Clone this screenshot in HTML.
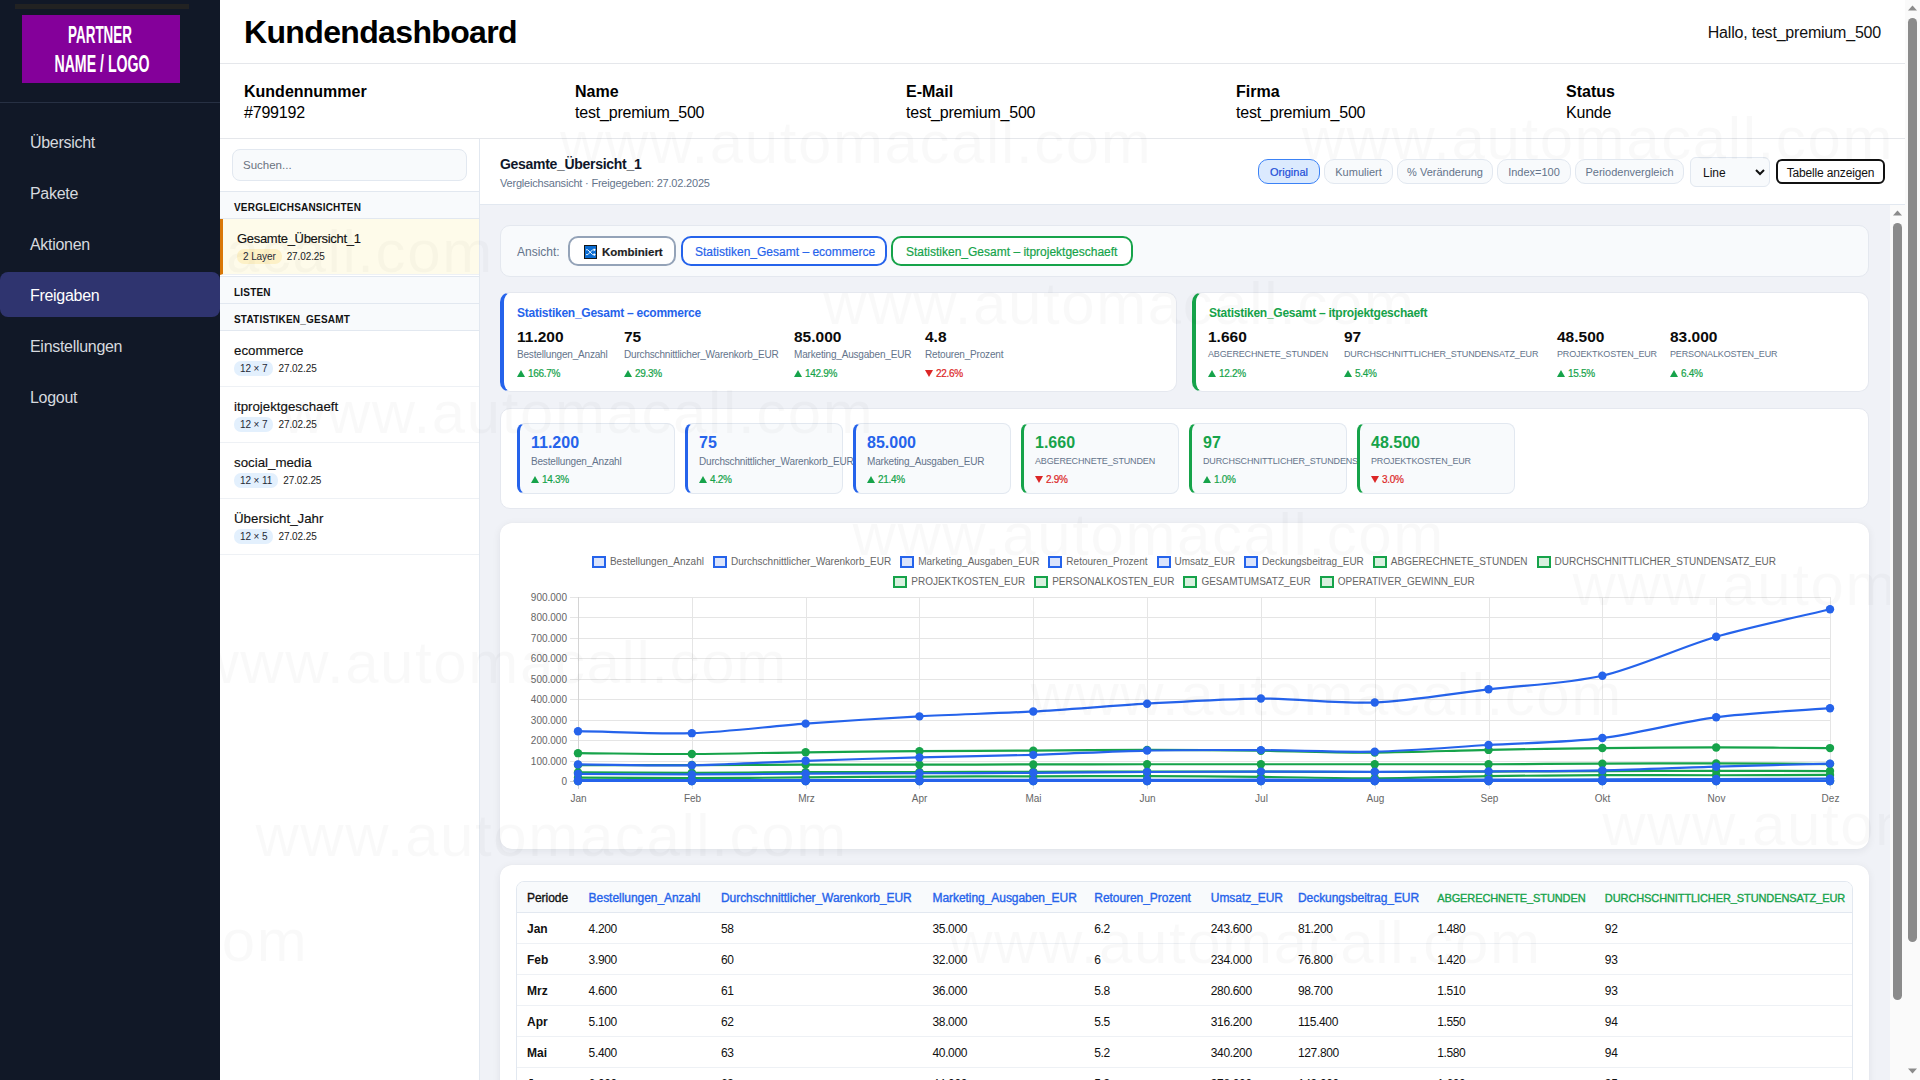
<!DOCTYPE html>
<html lang="de">
<head>
<meta charset="utf-8">
<title>Kundendashboard</title>
<style>
*{box-sizing:border-box;margin:0;padding:0}
html,body{width:1920px;height:1080px;overflow:hidden;background:#fff;font-family:"Liberation Sans",sans-serif;color:#111}
.abs{position:absolute}
/* sidebar */
.sb{position:absolute;left:0;top:0;width:220px;height:1080px;background:#111827}
.sb .bar{position:absolute;left:15px;top:4px;width:174px;height:5px;background:#222}
.sb .logo{position:absolute;left:22px;top:15px;width:158px;height:68px;background:#84009a;color:#fff;text-align:center;font-weight:700}
.sb .logo span{position:absolute;left:-80px;width:318px;font-size:24px;line-height:24px;transform:scaleX(.56);white-space:nowrap}
.sb .sep{position:absolute;left:0;top:102px;width:220px;height:1px;background:#273043}
.nav{position:absolute;left:0;width:220px;height:45px;line-height:45px;padding-left:30px;font-size:16px;color:#d6d9df;letter-spacing:-.3px}
.nav.act{background:#2f346f;color:#fff;border-radius:8px;line-height:47px}
/* header */
.hdr{position:absolute;left:220px;top:0;width:1686px;height:64px;border-bottom:1px solid #e5e7eb}
.hdr h1{position:absolute;left:24px;top:13px;font-size:32px;line-height:38px;font-weight:700;letter-spacing:-.65px;color:#000}
.hdr .hello{position:absolute;right:25px;top:23px;font-size:16px;line-height:20px;color:#111;letter-spacing:-.2px}
.info{position:absolute;left:220px;top:64px;width:1686px;height:75px;border-bottom:1px solid #e5e7eb}
.info .c{position:absolute;top:17px;font-size:16px;line-height:21px;color:#000;letter-spacing:-.2px}
.info .c b{letter-spacing:0}
.info .c b{display:block;font-weight:700}
/* left panel */
.lp{position:absolute;left:220px;top:139px;width:260px;height:941px;border-right:1px solid #e2e8f0;background:#fff}
.search{position:absolute;left:12px;top:10px;width:235px;height:32px;border:1px solid #e2e8f0;border-radius:8px;background:#f8fafc;font-size:11.5px;color:#6b7280;padding:9px 0 0 10px}
.sec{position:absolute;left:0;width:259px;background:#f8fafc;border-top:1px solid #e2e8f0;border-bottom:1px solid #e2e8f0;font-size:10px;font-weight:700;letter-spacing:.2px;padding-left:14px;color:#111;padding-top:2px}
.item{position:absolute;left:0;width:259px;height:56px;border-bottom:1px solid #eef1f5;padding-left:14px}
.item .t{position:absolute;left:14px;top:12px;font-size:13.3px;line-height:16px;color:#111;-webkit-text-stroke:.15px #111}
.item.act .t{font-size:13px;letter-spacing:-.3px}
.item .m{position:absolute;left:14px;top:30px;font-size:10px;line-height:13px;color:#222;letter-spacing:-.1px}
.item .m i{font-style:normal;display:inline-block;background:#e3f0fd;border-radius:7px;padding:1px 6px 1px 6px;margin-right:5px;color:#1f2937}
.item.act{background:#fefbea;border-left:3px solid #d97706}
.item.act .t,.item.act .m{left:14px}
.item.act .m i{background:#fdf1c7}

/* main top bar */
.tb{position:absolute;left:480px;top:139px;width:1426px;height:66px;border-bottom:1px solid #e2e8f0;background:#fff}
.tb .tt{position:absolute;left:20px;top:17px;font-size:14px;line-height:17px;font-weight:700;letter-spacing:-.3px;color:#0f172a}
.tb .st{position:absolute;left:20px;top:38px;font-size:11px;line-height:13px;color:#64748b;letter-spacing:-.2px}
.pill{position:absolute;top:20px;height:25px;border:1px solid #e2e8f0;background:#f8fafc;border-radius:10px;font-size:11px;line-height:25px;text-align:center;color:#64748b}
.pill.on{background:#dbeafe;border-color:#3b82f6;color:#1d4ed8;-webkit-text-stroke:.2px currentColor}
.sel{position:absolute;left:1210px;top:18px;width:80px;height:30px;border:1px solid #e2e8f0;border-radius:6px;background:#f8fafc;font-size:12px;line-height:31px;padding-left:12px;color:#111}
.sel svg{position:absolute;right:4px;top:10px}
.tbl-btn{position:absolute;left:1296px;top:20px;width:109px;height:25px;border:2px solid #111;border-radius:6px;background:#fff;font-size:12px;line-height:24px;text-align:center;color:#111;letter-spacing:-.15px}
/* content */
.ct{position:absolute;left:480px;top:205px;width:1410px;height:875px;background:#f0f2f7;overflow:hidden}
.sc1{position:absolute;left:1890px;top:205px;width:15px;height:875px;background:#fafafa}
.sc2{position:absolute;left:1905px;top:0;width:15px;height:1080px;background:#fafafa}
.thumb{position:absolute;background:#8b8b8b;border-radius:5px}
.card{position:absolute;background:#fff;border:1px solid #e5e8ef;border-radius:10px}

.ans{left:20px;top:20px;width:1369px;height:52px;background:#f8fafc;border-color:#e4e8ef}
.ans .lab{position:absolute;left:16px;top:19px;font-size:12px;line-height:15px;color:#64748b}
.vb{position:absolute;top:10px;height:30px;border:2px solid #94a3b8;border-radius:10px;background:#fff;font-size:12px;line-height:28px;white-space:nowrap;-webkit-text-stroke:.2px currentColor}
.sum{top:87px;width:677px;height:100px;border-left:4px solid}
.sum .h{position:absolute;left:13px;top:13px;font-size:12px;line-height:14px;font-weight:700;letter-spacing:-.25px;white-space:nowrap}
.sum .col{position:absolute;top:35px;white-space:nowrap}
.sum .v{font-size:15.5px;line-height:18px;font-weight:700;color:#0b0b0b}
.sum .l{font-size:10px;line-height:13px;color:#64748b;margin-top:2px;letter-spacing:-.18px}
.uc{font-size:9px!important;letter-spacing:-.15px!important}
.tri{display:inline-block;width:8px;height:7px;margin-right:3px;vertical-align:0}
.sum .d{font-size:10px;line-height:13px;margin-top:6px;letter-spacing:-.3px;-webkit-text-stroke:.2px currentColor}
.kpi{left:20px;top:203px;width:1369px;height:101px}
.tile{position:absolute;top:14px;width:158px;height:71px;background:#f8fafc;border:1px solid #e2e8f0;border-left:3px solid;border-radius:8px;white-space:nowrap}
.tile .v{position:absolute;left:11px;top:9px;font-size:16px;line-height:19px;font-weight:700}
.tile .l{position:absolute;left:11px;top:30.5px;font-size:10px;line-height:13px;color:#64748b;letter-spacing:-.18px}
.tile .d{position:absolute;left:11px;top:48.5px;font-size:10px;line-height:13px;letter-spacing:-.3px;-webkit-text-stroke:.2px currentColor}
.chart{left:20px;top:318px;width:1369px;height:326px;border:none;box-shadow:0 2px 8px rgba(15,23,42,.07),0 0 1px rgba(15,23,42,.06);border-radius:12px}
.tcard{left:20px;top:660px;width:1369px;height:400px;border:none;box-shadow:0 2px 8px rgba(15,23,42,.07),0 0 1px rgba(15,23,42,.06);border-radius:12px}
.tw{position:absolute;left:16px;top:16px;width:1337px;height:400px;border:1px solid #e2e8f0;border-radius:8px;overflow:hidden}
table{border-collapse:collapse;table-layout:fixed;white-space:nowrap}
th{height:30px;background:#f8fafc;border-bottom:1px solid #e2e8f0;font-size:12px;font-weight:400;-webkit-text-stroke:.35px currentColor;letter-spacing:-.05px;text-align:left;padding:3px 0 0 10px}
td{height:31px;border-bottom:1px solid #eef1f5;font-size:12px;letter-spacing:-.35px;text-align:left;padding:2px 0 0 10px;color:#111}
td.p{letter-spacing:0}
td.p{font-size:12px;font-weight:700}
.up{color:#16a34a}.dn{color:#dc2626}
</style>
</head>
<body>
<div class="sb">
  <div class="bar"></div>
  <div class="logo"><span style="top:8px;left:-81px">PARTNER</span><span style="top:37px;transform:scaleX(.59);left:-79.5px">NAME / LOGO</span></div>
  <div class="sep"></div>
  <div class="nav" style="top:120px">Übersicht</div>
  <div class="nav" style="top:171px">Pakete</div>
  <div class="nav" style="top:222px">Aktionen</div>
  <div class="nav act" style="top:272px">Freigaben</div>
  <div class="nav" style="top:324px">Einstellungen</div>
  <div class="nav" style="top:375px">Logout</div>
</div>

<div class="hdr">
  <h1>Kundendashboard</h1>
  <div class="hello">Hallo, test_premium_500</div>
</div>
<div class="info">
  <div class="c" style="left:24px"><b>Kundennummer</b>#799192</div>
  <div class="c" style="left:355px"><b>Name</b>test_premium_500</div>
  <div class="c" style="left:686px"><b>E-Mail</b>test_premium_500</div>
  <div class="c" style="left:1016px"><b>Firma</b>test_premium_500</div>
  <div class="c" style="left:1346px"><b>Status</b>Kunde</div>
</div>

<div class="lp">
  <div class="search">Suchen...</div>
  <div class="sec" style="top:52px;height:28px;line-height:27px">VERGLEICHSANSICHTEN</div>
  <div class="item act" style="top:80px"><div class="t">Gesamte_Übersicht_1</div><div class="m"><i>2 Layer</i>27.02.25</div></div>
  <div class="sec" style="top:137px;height:28px;line-height:27px">LISTEN</div>
  <div class="sec" style="top:164px;height:28px;line-height:27px">STATISTIKEN_GESAMT</div>
  <div class="item" style="top:192px"><div class="t">ecommerce</div><div class="m"><i>12 × 7</i>27.02.25</div></div>
  <div class="item" style="top:248px"><div class="t">itprojektgeschaeft</div><div class="m"><i>12 × 7</i>27.02.25</div></div>
  <div class="item" style="top:304px"><div class="t">social_media</div><div class="m"><i>12 × 11</i>27.02.25</div></div>
  <div class="item" style="top:360px"><div class="t">Übersicht_Jahr</div><div class="m"><i>12 × 5</i>27.02.25</div></div>
</div>


<div class="tb">
  <div class="tt">Gesamte_Übersicht_1</div>
  <div class="st">Vergleichsansicht · Freigegeben: 27.02.2025</div>
  <div class="pill on" style="left:778px;width:62px">Original</div>
  <div class="pill" style="left:844px;width:69px">Kumuliert</div>
  <div class="pill" style="left:917px;width:96px">% Veränderung</div>
  <div class="pill" style="left:1017px;width:74px">Index=100</div>
  <div class="pill" style="left:1095px;width:109px">Periodenvergleich</div>
  <div class="sel">Line<svg width="10" height="8" viewBox="0 0 10 8"><path d="M1 2 L5 6 L9 2" fill="none" stroke="#111" stroke-width="2"/></svg></div>
  <div class="tbl-btn">Tabelle anzeigen</div>
</div>
<div class="ct"><div class="card ans"><div class="lab">Ansicht:</div><div class="vb" style="left:67px;width:108px;padding-left:32px;font-weight:700;font-size:11.5px;color:#1e1e1e"><svg style="position:absolute;left:14px;top:6.5px" width="13" height="14" viewBox="0 0 13 14"><rect x="0.5" y="0.5" width="12" height="13" fill="#0a6cd2" stroke="#161616" stroke-width="1"/><path d="M2 4.8 H3.8 L8.6 9.6 H10.2 M2 9.6 H3.8 L8.6 4.8 H10.2" fill="none" stroke="#fff" stroke-width="0.9"/><path d="M9.8 3.2 L11.8 4.8 L9.8 6.4Z M9.8 8 L11.8 9.6 L9.8 11.2Z" fill="#fff"/></svg>Kombiniert</div><div class="vb" style="left:180px;width:206px;border-color:#2563eb;color:#2563eb;padding-left:12px">Statistiken_Gesamt – ecommerce</div><div class="vb" style="left:390px;width:242px;border-color:#16a34a;color:#16a34a;padding-left:13px">Statistiken_Gesamt – itprojektgeschaeft</div></div><div class="card sum" style="left:20px;border-left-color:#2563eb"><div class="h" style="color:#2563eb">Statistiken_Gesamt – ecommerce</div><div class="col" style="left:13px"><div class="v">11.200</div><div class="l">Bestellungen_Anzahl</div><div class="d up"><svg class="tri" viewBox="0 0 8 7"><path d="M4 0 L8 7 L0 7Z" fill="#16a34a"/></svg>166.7%</div></div><div class="col" style="left:120px"><div class="v">75</div><div class="l">Durchschnittlicher_Warenkorb_EUR</div><div class="d up"><svg class="tri" viewBox="0 0 8 7"><path d="M4 0 L8 7 L0 7Z" fill="#16a34a"/></svg>29.3%</div></div><div class="col" style="left:290px"><div class="v">85.000</div><div class="l">Marketing_Ausgaben_EUR</div><div class="d up"><svg class="tri" viewBox="0 0 8 7"><path d="M4 0 L8 7 L0 7Z" fill="#16a34a"/></svg>142.9%</div></div><div class="col" style="left:421px"><div class="v">4.8</div><div class="l">Retouren_Prozent</div><div class="d dn"><svg class="tri" viewBox="0 0 8 7"><path d="M0 0 L8 0 L4 7Z" fill="#dc2626"/></svg>22.6%</div></div></div><div class="card sum" style="left:712px;border-left-color:#16a34a"><div class="h" style="color:#16a34a">Statistiken_Gesamt – itprojektgeschaeft</div><div class="col" style="left:12px"><div class="v">1.660</div><div class="l uc">ABGERECHNETE_STUNDEN</div><div class="d up"><svg class="tri" viewBox="0 0 8 7"><path d="M4 0 L8 7 L0 7Z" fill="#16a34a"/></svg>12.2%</div></div><div class="col" style="left:148px"><div class="v">97</div><div class="l uc">DURCHSCHNITTLICHER_STUNDENSATZ_EUR</div><div class="d up"><svg class="tri" viewBox="0 0 8 7"><path d="M4 0 L8 7 L0 7Z" fill="#16a34a"/></svg>5.4%</div></div><div class="col" style="left:361px"><div class="v">48.500</div><div class="l uc">PROJEKTKOSTEN_EUR</div><div class="d up"><svg class="tri" viewBox="0 0 8 7"><path d="M4 0 L8 7 L0 7Z" fill="#16a34a"/></svg>15.5%</div></div><div class="col" style="left:474px"><div class="v">83.000</div><div class="l uc">PERSONALKOSTEN_EUR</div><div class="d up"><svg class="tri" viewBox="0 0 8 7"><path d="M4 0 L8 7 L0 7Z" fill="#16a34a"/></svg>6.4%</div></div></div><div class="card kpi"><div class="tile" style="left:16px;border-left-color:#2563eb"><div class="v" style="color:#2563eb">11.200</div><div class="l">Bestellungen_Anzahl</div><div class="d up"><svg class="tri" viewBox="0 0 8 7"><path d="M4 0 L8 7 L0 7Z" fill="#16a34a"/></svg>14.3%</div></div><div class="tile" style="left:184px;border-left-color:#2563eb"><div class="v" style="color:#2563eb">75</div><div class="l">Durchschnittlicher_Warenkorb_EUR</div><div class="d up"><svg class="tri" viewBox="0 0 8 7"><path d="M4 0 L8 7 L0 7Z" fill="#16a34a"/></svg>4.2%</div></div><div class="tile" style="left:352px;border-left-color:#2563eb"><div class="v" style="color:#2563eb">85.000</div><div class="l">Marketing_Ausgaben_EUR</div><div class="d up"><svg class="tri" viewBox="0 0 8 7"><path d="M4 0 L8 7 L0 7Z" fill="#16a34a"/></svg>21.4%</div></div><div class="tile" style="left:520px;border-left-color:#16a34a"><div class="v" style="color:#16a34a">1.660</div><div class="l uc">ABGERECHNETE_STUNDEN</div><div class="d dn"><svg class="tri" viewBox="0 0 8 7"><path d="M0 0 L8 0 L4 7Z" fill="#dc2626"/></svg>2.9%</div></div><div class="tile" style="left:688px;border-left-color:#16a34a"><div class="v" style="color:#16a34a">97</div><div class="l uc">DURCHSCHNITTLICHER_STUNDENSATZ_EUR</div><div class="d up"><svg class="tri" viewBox="0 0 8 7"><path d="M4 0 L8 7 L0 7Z" fill="#16a34a"/></svg>1.0%</div></div><div class="tile" style="left:856px;border-left-color:#16a34a"><div class="v" style="color:#16a34a">48.500</div><div class="l uc">PROJEKTKOSTEN_EUR</div><div class="d dn"><svg class="tri" viewBox="0 0 8 7"><path d="M0 0 L8 0 L4 7Z" fill="#dc2626"/></svg>3.0%</div></div></div><div class="card chart"><svg style="position:absolute;left:0;top:0" width="1369" height="326" viewBox="0 0 1369 326" font-family="Liberation Sans" font-size="10" fill="#666"><line x1="70" y1="258.5" x2="1330.5" y2="258.5" stroke="#e5e5e5" stroke-width="1"/><text x="67" y="262.0" text-anchor="end">0</text><line x1="70" y1="238.5" x2="1330.5" y2="238.5" stroke="#e5e5e5" stroke-width="1"/><text x="67" y="242.0" text-anchor="end">100.000</text><line x1="70" y1="217.5" x2="1330.5" y2="217.5" stroke="#e5e5e5" stroke-width="1"/><text x="67" y="221.0" text-anchor="end">200.000</text><line x1="70" y1="197.5" x2="1330.5" y2="197.5" stroke="#e5e5e5" stroke-width="1"/><text x="67" y="201.0" text-anchor="end">300.000</text><line x1="70" y1="176.5" x2="1330.5" y2="176.5" stroke="#e5e5e5" stroke-width="1"/><text x="67" y="180.0" text-anchor="end">400.000</text><line x1="70" y1="156.5" x2="1330.5" y2="156.5" stroke="#e5e5e5" stroke-width="1"/><text x="67" y="160.0" text-anchor="end">500.000</text><line x1="70" y1="135.5" x2="1330.5" y2="135.5" stroke="#e5e5e5" stroke-width="1"/><text x="67" y="139.0" text-anchor="end">600.000</text><line x1="70" y1="115.5" x2="1330.5" y2="115.5" stroke="#e5e5e5" stroke-width="1"/><text x="67" y="119.0" text-anchor="end">700.000</text><line x1="70" y1="94.5" x2="1330.5" y2="94.5" stroke="#e5e5e5" stroke-width="1"/><text x="67" y="98.0" text-anchor="end">800.000</text><line x1="70" y1="74.5" x2="1330.5" y2="74.5" stroke="#e5e5e5" stroke-width="1"/><text x="67" y="78.0" text-anchor="end">900.000</text><line x1="78.5" y1="74" x2="78.5" y2="266" stroke="#e5e5e5" stroke-width="1"/><text x="78.5" y="278.5" text-anchor="middle">Jan</text><line x1="192.5" y1="74" x2="192.5" y2="266" stroke="#e5e5e5" stroke-width="1"/><text x="192.5" y="278.5" text-anchor="middle">Feb</text><line x1="306.5" y1="74" x2="306.5" y2="266" stroke="#e5e5e5" stroke-width="1"/><text x="306.5" y="278.5" text-anchor="middle">Mrz</text><line x1="419.5" y1="74" x2="419.5" y2="266" stroke="#e5e5e5" stroke-width="1"/><text x="419.5" y="278.5" text-anchor="middle">Apr</text><line x1="533.5" y1="74" x2="533.5" y2="266" stroke="#e5e5e5" stroke-width="1"/><text x="533.5" y="278.5" text-anchor="middle">Mai</text><line x1="647.5" y1="74" x2="647.5" y2="266" stroke="#e5e5e5" stroke-width="1"/><text x="647.5" y="278.5" text-anchor="middle">Jun</text><line x1="761.5" y1="74" x2="761.5" y2="266" stroke="#e5e5e5" stroke-width="1"/><text x="761.5" y="278.5" text-anchor="middle">Jul</text><line x1="875.5" y1="74" x2="875.5" y2="266" stroke="#e5e5e5" stroke-width="1"/><text x="875.5" y="278.5" text-anchor="middle">Aug</text><line x1="989.5" y1="74" x2="989.5" y2="266" stroke="#e5e5e5" stroke-width="1"/><text x="989.5" y="278.5" text-anchor="middle">Sep</text><line x1="1102.5" y1="74" x2="1102.5" y2="266" stroke="#e5e5e5" stroke-width="1"/><text x="1102.5" y="278.5" text-anchor="middle">Okt</text><line x1="1216.5" y1="74" x2="1216.5" y2="266" stroke="#e5e5e5" stroke-width="1"/><text x="1216.5" y="278.5" text-anchor="middle">Nov</text><line x1="1330.5" y1="74" x2="1330.5" y2="266" stroke="#e5e5e5" stroke-width="1"/><text x="1330.5" y="278.5" text-anchor="middle">Dez</text><line x1="78.5" y1="74" x2="78.5" y2="266" stroke="#d4d4d4" stroke-width="1"/><line x1="70" y1="258.5" x2="1330.5" y2="258.5" stroke="#d4d4d4" stroke-width="1"/><path d="M78.00 254.70 C112.15 254.82 157.67 255.16 191.82 255.13 C225.96 255.09 271.49 254.67 305.64 254.44 C339.78 254.20 385.31 253.72 419.45 253.56 C453.60 253.41 499.13 253.47 533.27 253.40 C567.42 253.33 612.95 253.02 647.09 253.09 C681.24 253.16 726.76 253.54 760.91 253.87 C795.06 254.20 840.58 255.43 874.73 255.32 C908.87 255.20 954.40 253.56 988.55 253.09 C1022.69 252.63 1068.22 252.35 1102.36 252.22 C1136.51 252.09 1182.04 252.28 1216.18 252.24 C1250.33 252.20 1295.85 252.05 1330.00 251.96" fill="none" stroke="#16a34a" stroke-width="2.2"/><circle cx="78.00" cy="254.70" r="4.2" fill="#16a34a"/><circle cx="191.82" cy="255.13" r="4.2" fill="#16a34a"/><circle cx="305.64" cy="254.44" r="4.2" fill="#16a34a"/><circle cx="419.45" cy="253.56" r="4.2" fill="#16a34a"/><circle cx="533.27" cy="253.40" r="4.2" fill="#16a34a"/><circle cx="647.09" cy="253.09" r="4.2" fill="#16a34a"/><circle cx="760.91" cy="253.87" r="4.2" fill="#16a34a"/><circle cx="874.73" cy="255.32" r="4.2" fill="#16a34a"/><circle cx="988.55" cy="253.09" r="4.2" fill="#16a34a"/><circle cx="1102.36" cy="252.22" r="4.2" fill="#16a34a"/><circle cx="1216.18" cy="252.24" r="4.2" fill="#16a34a"/><circle cx="1330.00" cy="251.96" r="4.2" fill="#16a34a"/><path d="M78.00 230.16 C112.15 230.41 157.67 231.13 191.82 231.00 C225.97 230.87 271.49 229.71 305.64 229.29 C339.78 228.87 385.31 228.46 419.45 228.21 C453.60 227.96 499.13 227.83 533.27 227.64 C567.42 227.44 612.95 226.91 647.09 226.92 C681.24 226.93 726.77 227.31 760.91 227.70 C795.06 228.10 840.58 229.67 874.73 229.56 C908.88 229.44 954.40 227.60 988.55 226.92 C1022.69 226.24 1068.22 225.40 1102.36 225.03 C1136.51 224.65 1182.04 224.43 1216.18 224.44 C1250.33 224.45 1295.85 224.89 1330.00 225.08" fill="none" stroke="#16a34a" stroke-width="2.2"/><circle cx="78.00" cy="230.16" r="4.2" fill="#16a34a"/><circle cx="191.82" cy="231.00" r="4.2" fill="#16a34a"/><circle cx="305.64" cy="229.29" r="4.2" fill="#16a34a"/><circle cx="419.45" cy="228.21" r="4.2" fill="#16a34a"/><circle cx="533.27" cy="227.64" r="4.2" fill="#16a34a"/><circle cx="647.09" cy="226.92" r="4.2" fill="#16a34a"/><circle cx="760.91" cy="227.70" r="4.2" fill="#16a34a"/><circle cx="874.73" cy="229.56" r="4.2" fill="#16a34a"/><circle cx="988.55" cy="226.92" r="4.2" fill="#16a34a"/><circle cx="1102.36" cy="225.03" r="4.2" fill="#16a34a"/><circle cx="1216.18" cy="224.44" r="4.2" fill="#16a34a"/><circle cx="1330.00" cy="225.08" r="4.2" fill="#16a34a"/><path d="M78.00 242.05 C112.15 242.05 157.67 242.11 191.82 242.05 C225.96 241.99 271.49 241.71 305.64 241.64 C339.78 241.58 385.31 241.68 419.45 241.64 C453.60 241.61 499.13 241.50 533.27 241.44 C567.42 241.38 612.95 241.27 647.09 241.24 C681.24 241.20 726.76 241.24 760.91 241.24 C795.05 241.24 840.58 241.24 874.73 241.24 C908.87 241.24 954.40 241.33 988.55 241.24 C1022.69 241.14 1068.22 240.74 1102.36 240.62 C1136.51 240.50 1182.04 240.36 1216.18 240.42 C1250.33 240.48 1295.85 240.85 1330.00 241.03" fill="none" stroke="#16a34a" stroke-width="2.2"/><circle cx="78.00" cy="242.05" r="4.2" fill="#16a34a"/><circle cx="191.82" cy="242.05" r="4.2" fill="#16a34a"/><circle cx="305.64" cy="241.64" r="4.2" fill="#16a34a"/><circle cx="419.45" cy="241.64" r="4.2" fill="#16a34a"/><circle cx="533.27" cy="241.44" r="4.2" fill="#16a34a"/><circle cx="647.09" cy="241.24" r="4.2" fill="#16a34a"/><circle cx="760.91" cy="241.24" r="4.2" fill="#16a34a"/><circle cx="874.73" cy="241.24" r="4.2" fill="#16a34a"/><circle cx="988.55" cy="241.24" r="4.2" fill="#16a34a"/><circle cx="1102.36" cy="240.62" r="4.2" fill="#16a34a"/><circle cx="1216.18" cy="240.42" r="4.2" fill="#16a34a"/><circle cx="1330.00" cy="241.03" r="4.2" fill="#16a34a"/><path d="M78.00 249.41 C112.15 249.54 157.67 249.85 191.82 249.82 C225.96 249.79 271.49 249.33 305.64 249.21 C339.78 249.09 385.31 249.07 419.45 249.00 C453.60 248.94 499.13 248.86 533.27 248.80 C567.42 248.74 612.95 248.63 647.09 248.60 C681.24 248.56 726.76 248.53 760.91 248.60 C795.05 248.66 840.58 249.00 874.73 249.00 C908.87 249.00 954.40 248.72 988.55 248.60 C1022.69 248.47 1068.22 248.31 1102.36 248.19 C1136.51 248.06 1182.04 247.79 1216.18 247.78 C1250.33 247.76 1295.85 247.99 1330.00 248.08" fill="none" stroke="#16a34a" stroke-width="2.2"/><circle cx="78.00" cy="249.41" r="4.2" fill="#16a34a"/><circle cx="191.82" cy="249.82" r="4.2" fill="#16a34a"/><circle cx="305.64" cy="249.21" r="4.2" fill="#16a34a"/><circle cx="419.45" cy="249.00" r="4.2" fill="#16a34a"/><circle cx="533.27" cy="248.80" r="4.2" fill="#16a34a"/><circle cx="647.09" cy="248.60" r="4.2" fill="#16a34a"/><circle cx="760.91" cy="248.60" r="4.2" fill="#16a34a"/><circle cx="874.73" cy="249.00" r="4.2" fill="#16a34a"/><circle cx="988.55" cy="248.60" r="4.2" fill="#16a34a"/><circle cx="1102.36" cy="248.19" r="4.2" fill="#16a34a"/><circle cx="1216.18" cy="247.78" r="4.2" fill="#16a34a"/><circle cx="1330.00" cy="248.08" r="4.2" fill="#16a34a"/><path d="M78.00 257.98 C112.15 257.98 157.67 257.98 191.82 257.98 C225.96 257.98 271.49 257.98 305.64 257.98 C339.78 257.98 385.31 257.98 419.45 257.98 C453.60 257.98 499.13 257.98 533.27 257.98 C567.42 257.98 612.95 257.98 647.09 257.98 C681.24 257.98 726.76 257.98 760.91 257.98 C795.05 257.98 840.58 257.98 874.73 257.98 C908.87 257.98 954.40 257.98 988.55 257.98 C1022.69 257.98 1068.22 257.98 1102.36 257.98 C1136.51 257.98 1182.04 257.98 1216.18 257.98 C1250.33 257.98 1295.85 257.98 1330.00 257.98" fill="none" stroke="#16a34a" stroke-width="2.2"/><circle cx="78.00" cy="257.98" r="4.2" fill="#16a34a"/><circle cx="191.82" cy="257.98" r="4.2" fill="#16a34a"/><circle cx="305.64" cy="257.98" r="4.2" fill="#16a34a"/><circle cx="419.45" cy="257.98" r="4.2" fill="#16a34a"/><circle cx="533.27" cy="257.98" r="4.2" fill="#16a34a"/><circle cx="647.09" cy="257.98" r="4.2" fill="#16a34a"/><circle cx="760.91" cy="257.98" r="4.2" fill="#16a34a"/><circle cx="874.73" cy="257.98" r="4.2" fill="#16a34a"/><circle cx="988.55" cy="257.98" r="4.2" fill="#16a34a"/><circle cx="1102.36" cy="257.98" r="4.2" fill="#16a34a"/><circle cx="1216.18" cy="257.98" r="4.2" fill="#16a34a"/><circle cx="1330.00" cy="257.98" r="4.2" fill="#16a34a"/><path d="M78.00 257.70 C112.15 257.70 157.67 257.71 191.82 257.71 C225.96 257.71 271.49 257.70 305.64 257.69 C339.78 257.69 385.31 257.69 419.45 257.68 C453.60 257.68 499.13 257.68 533.27 257.68 C567.42 257.68 612.95 257.67 647.09 257.67 C681.24 257.67 726.76 257.68 760.91 257.68 C795.05 257.68 840.58 257.70 874.73 257.70 C908.87 257.70 954.40 257.68 988.55 257.67 C1022.69 257.67 1068.22 257.66 1102.36 257.66 C1136.51 257.65 1182.04 257.65 1216.18 257.65 C1250.33 257.65 1295.85 257.66 1330.00 257.66" fill="none" stroke="#16a34a" stroke-width="2.2"/><circle cx="78.00" cy="257.70" r="4.2" fill="#16a34a"/><circle cx="191.82" cy="257.71" r="4.2" fill="#16a34a"/><circle cx="305.64" cy="257.69" r="4.2" fill="#16a34a"/><circle cx="419.45" cy="257.68" r="4.2" fill="#16a34a"/><circle cx="533.27" cy="257.68" r="4.2" fill="#16a34a"/><circle cx="647.09" cy="257.67" r="4.2" fill="#16a34a"/><circle cx="760.91" cy="257.68" r="4.2" fill="#16a34a"/><circle cx="874.73" cy="257.70" r="4.2" fill="#16a34a"/><circle cx="988.55" cy="257.67" r="4.2" fill="#16a34a"/><circle cx="1102.36" cy="257.66" r="4.2" fill="#16a34a"/><circle cx="1216.18" cy="257.65" r="4.2" fill="#16a34a"/><circle cx="1330.00" cy="257.66" r="4.2" fill="#16a34a"/><path d="M78.00 241.40 C112.15 241.67 157.69 242.84 191.82 242.30 C225.98 241.76 271.49 239.01 305.64 237.82 C339.78 236.64 385.31 235.30 419.45 234.41 C453.60 233.51 499.14 232.90 533.27 231.87 C567.43 230.84 612.93 228.25 647.09 227.54 C681.22 226.83 726.77 226.96 760.91 227.13 C795.06 227.30 840.61 229.43 874.73 228.66 C908.90 227.89 954.40 224.06 988.55 222.02 C1022.69 219.98 1068.47 219.21 1102.36 215.07 C1136.76 210.87 1181.81 198.72 1216.18 194.21 C1250.10 189.77 1295.85 187.92 1330.00 185.22" fill="none" stroke="#2563eb" stroke-width="2.2"/><circle cx="78.00" cy="241.40" r="4.2" fill="#2563eb"/><circle cx="191.82" cy="242.30" r="4.2" fill="#2563eb"/><circle cx="305.64" cy="237.82" r="4.2" fill="#2563eb"/><circle cx="419.45" cy="234.41" r="4.2" fill="#2563eb"/><circle cx="533.27" cy="231.87" r="4.2" fill="#2563eb"/><circle cx="647.09" cy="227.54" r="4.2" fill="#2563eb"/><circle cx="760.91" cy="227.13" r="4.2" fill="#2563eb"/><circle cx="874.73" cy="228.66" r="4.2" fill="#2563eb"/><circle cx="988.55" cy="222.02" r="4.2" fill="#2563eb"/><circle cx="1102.36" cy="215.07" r="4.2" fill="#2563eb"/><circle cx="1216.18" cy="194.21" r="4.2" fill="#2563eb"/><circle cx="1330.00" cy="185.22" r="4.2" fill="#2563eb"/><path d="M78.00 208.20 C112.15 208.79 157.73 211.29 191.82 210.16 C226.02 209.02 271.47 203.16 305.64 200.63 C339.76 198.11 385.29 195.18 419.45 193.35 C453.58 191.53 499.15 190.34 533.27 188.45 C567.44 186.55 612.92 182.65 647.09 180.72 C681.21 178.79 726.76 175.75 760.91 175.57 C795.05 175.38 840.69 180.88 874.73 179.49 C908.98 178.10 954.41 170.32 988.55 166.31 C1022.70 162.29 1069.05 160.45 1102.36 152.75 C1137.34 144.68 1181.57 123.85 1216.18 113.74 C1249.86 103.91 1295.85 94.51 1330.00 86.27" fill="none" stroke="#2563eb" stroke-width="2.2"/><circle cx="78.00" cy="208.20" r="4.2" fill="#2563eb"/><circle cx="191.82" cy="210.16" r="4.2" fill="#2563eb"/><circle cx="305.64" cy="200.63" r="4.2" fill="#2563eb"/><circle cx="419.45" cy="193.35" r="4.2" fill="#2563eb"/><circle cx="533.27" cy="188.45" r="4.2" fill="#2563eb"/><circle cx="647.09" cy="180.72" r="4.2" fill="#2563eb"/><circle cx="760.91" cy="175.57" r="4.2" fill="#2563eb"/><circle cx="874.73" cy="179.49" r="4.2" fill="#2563eb"/><circle cx="988.55" cy="166.31" r="4.2" fill="#2563eb"/><circle cx="1102.36" cy="152.75" r="4.2" fill="#2563eb"/><circle cx="1216.18" cy="113.74" r="4.2" fill="#2563eb"/><circle cx="1330.00" cy="86.27" r="4.2" fill="#2563eb"/><path d="M78.00 258.00 C112.15 258.00 157.67 258.00 191.82 258.00 C225.96 258.00 271.49 258.00 305.64 258.00 C339.78 258.00 385.31 258.00 419.45 258.00 C453.60 258.00 499.13 258.00 533.27 258.00 C567.42 258.00 612.95 258.00 647.09 258.00 C681.24 258.00 726.76 258.00 760.91 258.00 C795.05 258.00 840.58 258.00 874.73 258.00 C908.87 258.00 954.40 258.00 988.55 258.00 C1022.69 258.00 1068.22 258.00 1102.36 258.00 C1136.51 258.00 1182.04 258.00 1216.18 258.00 C1250.33 258.00 1295.85 258.00 1330.00 258.00" fill="none" stroke="#2563eb" stroke-width="2.2"/><circle cx="78.00" cy="258.00" r="4.2" fill="#2563eb"/><circle cx="191.82" cy="258.00" r="4.2" fill="#2563eb"/><circle cx="305.64" cy="258.00" r="4.2" fill="#2563eb"/><circle cx="419.45" cy="258.00" r="4.2" fill="#2563eb"/><circle cx="533.27" cy="258.00" r="4.2" fill="#2563eb"/><circle cx="647.09" cy="258.00" r="4.2" fill="#2563eb"/><circle cx="760.91" cy="258.00" r="4.2" fill="#2563eb"/><circle cx="874.73" cy="258.00" r="4.2" fill="#2563eb"/><circle cx="988.55" cy="258.00" r="4.2" fill="#2563eb"/><circle cx="1102.36" cy="258.00" r="4.2" fill="#2563eb"/><circle cx="1216.18" cy="258.00" r="4.2" fill="#2563eb"/><circle cx="1330.00" cy="258.00" r="4.2" fill="#2563eb"/><path d="M78.00 250.84 C112.15 251.03 157.67 251.49 191.82 251.46 C225.96 251.43 271.49 250.82 305.64 250.64 C339.78 250.46 385.31 250.35 419.45 250.23 C453.60 250.11 499.13 250.01 533.27 249.82 C567.42 249.64 612.95 249.19 647.09 249.00 C681.24 248.82 726.76 248.63 760.91 248.60 C795.05 248.56 840.58 248.83 874.73 248.80 C908.87 248.77 954.40 248.61 988.55 248.39 C1022.69 248.18 1068.23 248.07 1102.36 247.37 C1136.52 246.66 1182.03 244.70 1216.18 243.69 C1250.32 242.68 1295.85 241.54 1330.00 240.62" fill="none" stroke="#2563eb" stroke-width="2.2"/><circle cx="78.00" cy="250.84" r="4.2" fill="#2563eb"/><circle cx="191.82" cy="251.46" r="4.2" fill="#2563eb"/><circle cx="305.64" cy="250.64" r="4.2" fill="#2563eb"/><circle cx="419.45" cy="250.23" r="4.2" fill="#2563eb"/><circle cx="533.27" cy="249.82" r="4.2" fill="#2563eb"/><circle cx="647.09" cy="249.00" r="4.2" fill="#2563eb"/><circle cx="760.91" cy="248.60" r="4.2" fill="#2563eb"/><circle cx="874.73" cy="248.80" r="4.2" fill="#2563eb"/><circle cx="988.55" cy="248.39" r="4.2" fill="#2563eb"/><circle cx="1102.36" cy="247.37" r="4.2" fill="#2563eb"/><circle cx="1216.18" cy="243.69" r="4.2" fill="#2563eb"/><circle cx="1330.00" cy="240.62" r="4.2" fill="#2563eb"/><path d="M78.00 257.99 C112.15 257.99 157.67 257.99 191.82 257.99 C225.96 257.99 271.49 257.99 305.64 257.99 C339.78 257.99 385.31 257.99 419.45 257.99 C453.60 257.99 499.13 257.99 533.27 257.99 C567.42 257.99 612.95 257.99 647.09 257.99 C681.24 257.99 726.76 257.99 760.91 257.99 C795.05 257.99 840.58 257.99 874.73 257.99 C908.87 257.99 954.40 257.99 988.55 257.99 C1022.69 257.99 1068.22 257.99 1102.36 257.99 C1136.51 257.99 1182.04 257.99 1216.18 257.99 C1250.33 257.99 1295.85 257.98 1330.00 257.98" fill="none" stroke="#2563eb" stroke-width="2.2"/><circle cx="78.00" cy="257.99" r="4.2" fill="#2563eb"/><circle cx="191.82" cy="257.99" r="4.2" fill="#2563eb"/><circle cx="305.64" cy="257.99" r="4.2" fill="#2563eb"/><circle cx="419.45" cy="257.99" r="4.2" fill="#2563eb"/><circle cx="533.27" cy="257.99" r="4.2" fill="#2563eb"/><circle cx="647.09" cy="257.99" r="4.2" fill="#2563eb"/><circle cx="760.91" cy="257.99" r="4.2" fill="#2563eb"/><circle cx="874.73" cy="257.99" r="4.2" fill="#2563eb"/><circle cx="988.55" cy="257.99" r="4.2" fill="#2563eb"/><circle cx="1102.36" cy="257.99" r="4.2" fill="#2563eb"/><circle cx="1216.18" cy="257.99" r="4.2" fill="#2563eb"/><circle cx="1330.00" cy="257.98" r="4.2" fill="#2563eb"/><path d="M78.00 257.14 C112.15 257.16 157.67 257.21 191.82 257.20 C225.96 257.19 271.49 257.10 305.64 257.06 C339.78 257.02 385.31 256.98 419.45 256.96 C453.60 256.93 499.13 256.92 533.27 256.90 C567.42 256.87 612.95 256.80 647.09 256.77 C681.24 256.75 726.76 256.71 760.91 256.71 C795.05 256.71 840.58 256.79 874.73 256.77 C908.87 256.75 954.40 256.64 988.55 256.59 C1022.69 256.53 1068.22 256.49 1102.36 256.41 C1136.51 256.32 1182.04 256.10 1216.18 256.00 C1250.33 255.89 1295.85 255.80 1330.00 255.71" fill="none" stroke="#2563eb" stroke-width="2.2"/><circle cx="78.00" cy="257.14" r="4.2" fill="#2563eb"/><circle cx="191.82" cy="257.20" r="4.2" fill="#2563eb"/><circle cx="305.64" cy="257.06" r="4.2" fill="#2563eb"/><circle cx="419.45" cy="256.96" r="4.2" fill="#2563eb"/><circle cx="533.27" cy="256.90" r="4.2" fill="#2563eb"/><circle cx="647.09" cy="256.77" r="4.2" fill="#2563eb"/><circle cx="760.91" cy="256.71" r="4.2" fill="#2563eb"/><circle cx="874.73" cy="256.77" r="4.2" fill="#2563eb"/><circle cx="988.55" cy="256.59" r="4.2" fill="#2563eb"/><circle cx="1102.36" cy="256.41" r="4.2" fill="#2563eb"/><circle cx="1216.18" cy="256.00" r="4.2" fill="#2563eb"/><circle cx="1330.00" cy="255.71" r="4.2" fill="#2563eb"/></svg><div style="position:absolute;left:16px;width:1337px;top:32px;height:14px;display:flex;justify-content:center;font-size:10px;line-height:14px;color:#666;white-space:nowrap"><span style="display:flex;align-items:center;margin-right:10px"><i style="display:inline-block;width:14px;height:12px;border:2px solid #2563eb;background:#dbe4fb;margin:0 4px 0 -1px"></i>Bestellungen_Anzahl</span><span style="display:flex;align-items:center;margin-right:10px"><i style="display:inline-block;width:14px;height:12px;border:2px solid #2563eb;background:#dbe4fb;margin:0 4px 0 -1px"></i>Durchschnittlicher_Warenkorb_EUR</span><span style="display:flex;align-items:center;margin-right:10px"><i style="display:inline-block;width:14px;height:12px;border:2px solid #2563eb;background:#dbe4fb;margin:0 4px 0 -1px"></i>Marketing_Ausgaben_EUR</span><span style="display:flex;align-items:center;margin-right:10px"><i style="display:inline-block;width:14px;height:12px;border:2px solid #2563eb;background:#dbe4fb;margin:0 4px 0 -1px"></i>Retouren_Prozent</span><span style="display:flex;align-items:center;margin-right:10px"><i style="display:inline-block;width:14px;height:12px;border:2px solid #2563eb;background:#dbe4fb;margin:0 4px 0 -1px"></i>Umsatz_EUR</span><span style="display:flex;align-items:center;margin-right:10px"><i style="display:inline-block;width:14px;height:12px;border:2px solid #2563eb;background:#dbe4fb;margin:0 4px 0 -1px"></i>Deckungsbeitrag_EUR</span><span style="display:flex;align-items:center;margin-right:10px"><i style="display:inline-block;width:14px;height:12px;border:2px solid #16a34a;background:#d9f0df;margin:0 4px 0 -1px"></i>ABGERECHNETE_STUNDEN</span><span style="display:flex;align-items:center;margin-right:0px"><i style="display:inline-block;width:14px;height:12px;border:2px solid #16a34a;background:#d9f0df;margin:0 4px 0 -1px"></i>DURCHSCHNITTLICHER_STUNDENSATZ_EUR</span></div><div style="position:absolute;left:16px;width:1337px;top:52px;height:14px;display:flex;justify-content:center;font-size:10px;line-height:14px;color:#666;white-space:nowrap"><span style="display:flex;align-items:center;margin-right:10px"><i style="display:inline-block;width:14px;height:12px;border:2px solid #16a34a;background:#d9f0df;margin:0 4px 0 -1px"></i>PROJEKTKOSTEN_EUR</span><span style="display:flex;align-items:center;margin-right:10px"><i style="display:inline-block;width:14px;height:12px;border:2px solid #16a34a;background:#d9f0df;margin:0 4px 0 -1px"></i>PERSONALKOSTEN_EUR</span><span style="display:flex;align-items:center;margin-right:10px"><i style="display:inline-block;width:14px;height:12px;border:2px solid #16a34a;background:#d9f0df;margin:0 4px 0 -1px"></i>GESAMTUMSATZ_EUR</span><span style="display:flex;align-items:center;margin-right:0px"><i style="display:inline-block;width:14px;height:12px;border:2px solid #16a34a;background:#d9f0df;margin:0 4px 0 -1px"></i>OPERATIVER_GEWINN_EUR</span></div></div><div class="card tcard"><div class="tw"><table style="width:1640px"><colgroup><col style="width:61.6px"><col style="width:132.4px"><col style="width:211.5px"><col style="width:161.8px"><col style="width:116.5px"><col style="width:87.2px"><col style="width:139.2px"><col style="width:167.7px"><col style="width:263px"><col style="width:150px"><col style="width:150px"></colgroup><tr><th style="color:#111">Periode</th><th style="color:#2563eb">Bestellungen_Anzahl</th><th style="color:#2563eb">Durchschnittlicher_Warenkorb_EUR</th><th style="color:#2563eb">Marketing_Ausgaben_EUR</th><th style="color:#2563eb">Retouren_Prozent</th><th style="color:#2563eb">Umsatz_EUR</th><th style="color:#2563eb">Deckungsbeitrag_EUR</th><th style="color:#16a34a;font-size:11px;letter-spacing:-.1px">ABGERECHNETE_STUNDEN</th><th style="color:#16a34a;font-size:11px;letter-spacing:-.1px">DURCHSCHNITTLICHER_STUNDENSATZ_EUR</th><th style="color:#16a34a;font-size:11px;letter-spacing:-.1px">PROJEKTKOSTEN_EUR</th><th style="color:#16a34a;font-size:11px;letter-spacing:-.1px">PERSONALKOSTEN_EUR</th></tr><tr><td class="p">Jan</td><td>4.200</td><td>58</td><td>35.000</td><td>6.2</td><td>243.600</td><td>81.200</td><td>1.480</td><td>92</td><td>42.000</td><td>78.000</td></tr><tr><td class="p">Feb</td><td>3.900</td><td>60</td><td>32.000</td><td>6</td><td>234.000</td><td>76.800</td><td>1.420</td><td>93</td><td>40.000</td><td>78.000</td></tr><tr><td class="p">Mrz</td><td>4.600</td><td>61</td><td>36.000</td><td>5.8</td><td>280.600</td><td>98.700</td><td>1.510</td><td>93</td><td>43.000</td><td>80.000</td></tr><tr><td class="p">Apr</td><td>5.100</td><td>62</td><td>38.000</td><td>5.5</td><td>316.200</td><td>115.400</td><td>1.550</td><td>94</td><td>44.000</td><td>80.000</td></tr><tr><td class="p">Mai</td><td>5.400</td><td>63</td><td>40.000</td><td>5.2</td><td>340.200</td><td>127.800</td><td>1.580</td><td>94</td><td>45.000</td><td>81.000</td></tr><tr><td class="p">Jun</td><td>6.000</td><td>63</td><td>44.000</td><td>5.3</td><td>378.000</td><td>149.000</td><td>1.600</td><td>95</td><td>46.000</td><td>82.000</td></tr><tr><td class="p">Jul</td><td>6.300</td><td>64</td><td>46.000</td><td>5.1</td><td>403.200</td><td>151.000</td><td>1.560</td><td>95</td><td>46.000</td><td>82.000</td></tr></table></div></div></div><div style="position:absolute;left:220px;top:0;width:1685px;height:1080px;overflow:hidden;pointer-events:none"><div style="position:absolute;left:340.0px;top:113.2px;font-size:60px;line-height:60px;letter-spacing:1.6px;white-space:nowrap;color:rgba(0,0,0,.025)">www.automacall.com</div><div style="position:absolute;left:1081.7px;top:109.2px;font-size:60px;line-height:60px;letter-spacing:1.6px;white-space:nowrap;color:rgba(0,0,0,.025)">www.automacall.com</div><div style="position:absolute;left:603.3px;top:274.2px;font-size:60px;line-height:60px;letter-spacing:1.6px;white-space:nowrap;color:rgba(0,0,0,.025)">www.automacall.com</div><div style="position:absolute;left:62.0px;top:383.4px;font-size:60px;line-height:60px;letter-spacing:1.6px;white-space:nowrap;color:rgba(0,0,0,.025)">www.automacall.com</div><div style="position:absolute;left:-318.6px;top:222.2px;font-size:60px;line-height:60px;letter-spacing:1.6px;white-space:nowrap;color:rgba(0,0,0,.025)">www.automacall.com</div><div style="position:absolute;left:-24.6px;top:632.9px;font-size:60px;line-height:60px;letter-spacing:1.6px;white-space:nowrap;color:rgba(0,0,0,.025)">www.automacall.com</div><div style="position:absolute;left:632.5px;top:504.6px;font-size:60px;line-height:60px;letter-spacing:1.6px;white-space:nowrap;color:rgba(0,0,0,.025)">www.automacall.com</div><div style="position:absolute;left:1352.6px;top:555.1px;font-size:60px;line-height:60px;letter-spacing:1.6px;white-space:nowrap;color:rgba(0,0,0,.025)">www.automacall.com</div><div style="position:absolute;left:810.5px;top:665.2px;font-size:60px;line-height:60px;letter-spacing:1.6px;white-space:nowrap;color:rgba(0,0,0,.025)">www.automacall.com</div><div style="position:absolute;left:35.4px;top:805.7px;font-size:60px;line-height:60px;letter-spacing:1.6px;white-space:nowrap;color:rgba(0,0,0,.025)">www.automacall.com</div><div style="position:absolute;left:1382.2px;top:795.1px;font-size:60px;line-height:60px;letter-spacing:1.6px;white-space:nowrap;color:rgba(0,0,0,.025)">www.automacall.com</div><div style="position:absolute;left:-504.0px;top:910.8px;font-size:60px;line-height:60px;letter-spacing:1.6px;white-space:nowrap;color:rgba(0,0,0,.025)">www.automacall.com</div><div style="position:absolute;left:729.2px;top:913.0px;font-size:60px;line-height:60px;letter-spacing:1.6px;white-space:nowrap;color:rgba(0,0,0,.025)">www.automacall.com</div></div><div class="sc1"><svg class="abs" style="left:3px;top:5px" width="9" height="6" viewBox="0 0 9 6"><path d="M0 5.5 L4.5 0.5 L9 5.5Z" fill="#8b8b8b"/></svg><div class="thumb" style="left:3px;top:18px;width:9px;height:777px"></div></div>
<div class="sc2"><svg class="abs" style="left:3px;top:5px" width="9" height="6" viewBox="0 0 9 6"><path d="M0 5.5 L4.5 0.5 L9 5.5Z" fill="#8b8b8b"/></svg><div class="thumb" style="left:3px;top:18px;width:9px;height:924px"></div><svg class="abs" style="left:3px;top:1068px" width="9" height="6" viewBox="0 0 9 6"><path d="M0 0.5 L4.5 5.5 L9 0.5Z" fill="#8b8b8b"/></svg></div>

</body>
</html>
